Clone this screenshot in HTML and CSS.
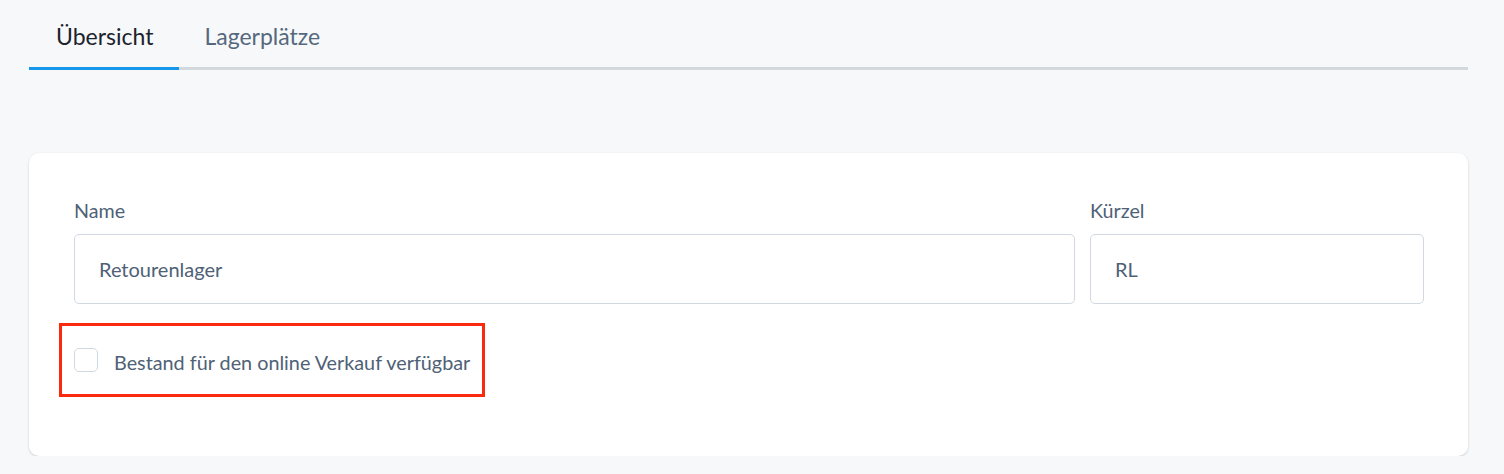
FILE: index.html
```html
<!DOCTYPE html>
<html lang="de">
<head>
<meta charset="utf-8">
<link rel="stylesheet" href="styles.css">
</head>
<body>
<div class="page">
  <nav class="tabs">
    <a class="tab active">Übersicht</a>
    <a class="tab">Lagerplätze</a>
  </nav>
  <section class="card">
    <div class="row">
      <div class="field grow">
        <label class="label">Name</label>
        <div class="input">Retourenlager</div>
      </div>
      <div class="field short">
        <label class="label">Kürzel</label>
        <div class="input">RL</div>
      </div>
    </div>
    <div class="highlight">
      <span class="checkbox"></span>
      <span class="check-label">Bestand für den online Verkauf verfügbar</span>
    </div>
  </section>
</div>
</body>
</html>
```

FILE: styles.css
```css
* { box-sizing: border-box; }
html, body {
  margin: 0;
  padding: 0;
  background: #f7f8fa;
  font-family: "Lato", "Open Sans", sans-serif;
}
.page {
  padding: 0 36px 0 29px;
}
.tabs {
  display: flex;
  height: 70px;
  border-bottom: 3px solid #d3d8de;
  align-items: stretch;
}
.tab {
  display: flex;
  align-items: center;
  padding: 4px 26px 0 27px;
  margin-bottom: -3px;
  font-size: 23px;
  color: #55687d;
  border-bottom: 3px solid transparent;
}
.tab.active {
  color: #1c232c;
  border-bottom-color: #1598ec;
}
.tab + .tab {
  padding-left: 25px;
}
.card {
  margin-top: 83px;
  background: #fff;
  border-radius: 10px;
  box-shadow: 0 1px 3px rgba(0,0,0,0.12), 0 1px 2px rgba(0,0,0,0.06);
  padding: 47px 44px 59px 45px;
}
.row {
  display: flex;
  gap: 15px;
}
.field { display: flex; flex-direction: column; }
.grow { flex: 1; }
.short { width: 334px; }
.label {
  font-size: 19.7px;
  color: #4e6176;
  line-height: 22px;
  margin-bottom: 12px;
}
.input {
  height: 70px;
  border: 1px solid #d0d9e1;
  border-radius: 5px;
  padding: 0 24px;
  display: flex;
  align-items: center;
  font-size: 20px;
  color: #4e6176;
}
.highlight {
  display: inline-flex;
  align-items: center;
  gap: 16px;
  margin: 19px 0 0 -15px;
  border: 3px solid #fb2a0f;
  padding: 0 12px;
  height: 74px;
}
.checkbox {
  width: 24px;
  height: 24px;
  border: 1px solid #d0d9e1;
  border-radius: 5px;
  background: #fff;
}
.check-label {
  font-size: 19.8px;
  color: #4e6176;
  padding-top: 4px;
}
```
